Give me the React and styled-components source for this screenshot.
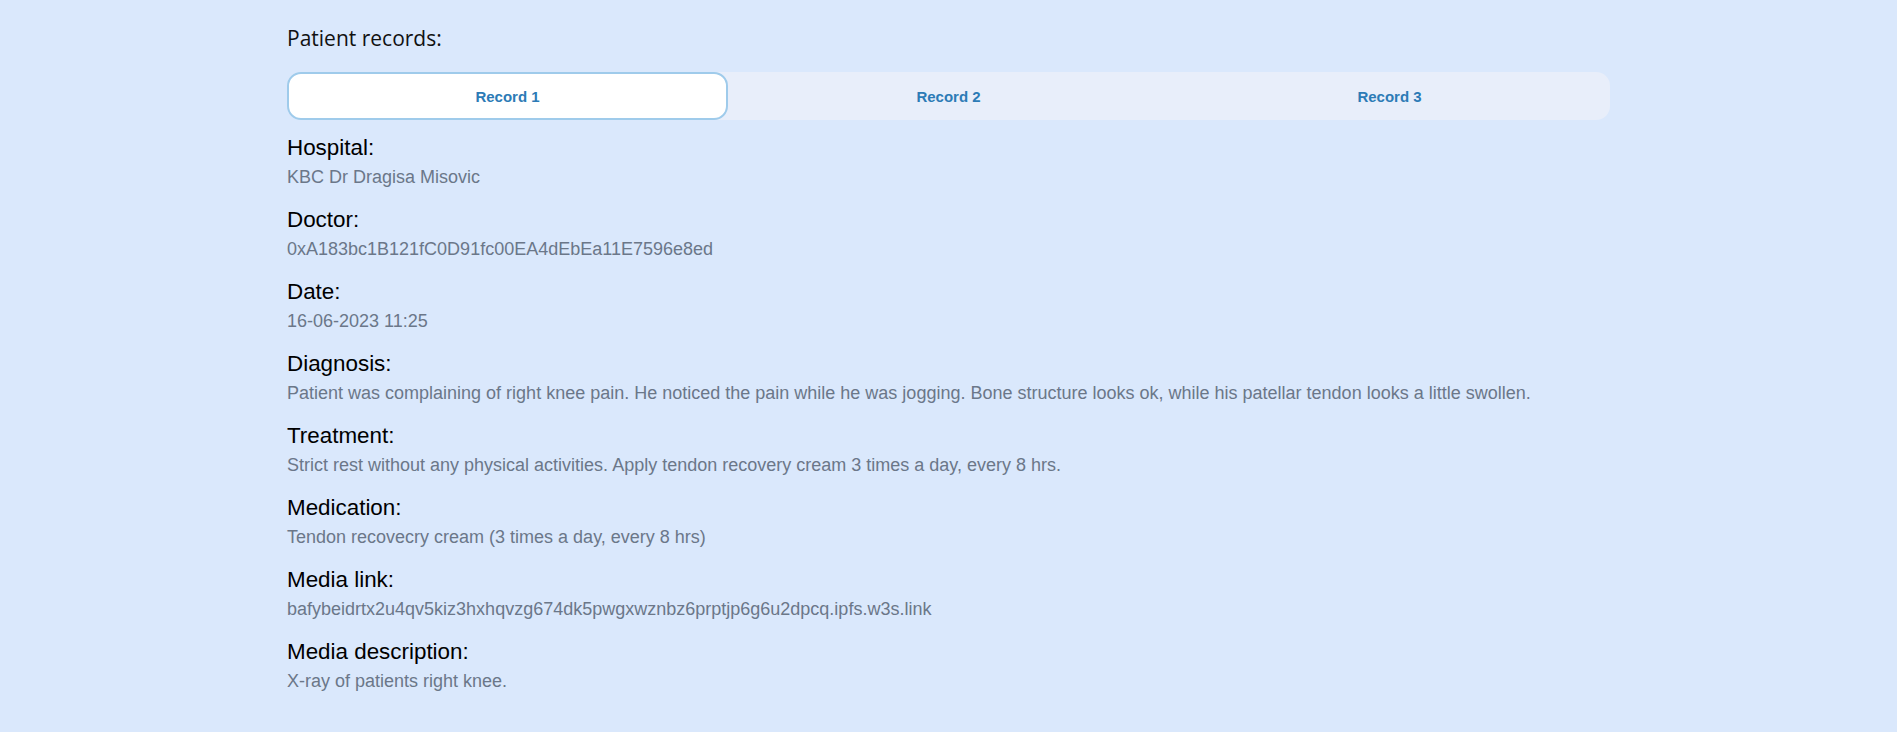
import React, { useState } from 'react';
import styled, { createGlobalStyle } from 'styled-components';

const GlobalStyle = createGlobalStyle`
    html, body {
        margin: 0;
        padding: 0;
        background-color: #dae8fc;
    }
    body {
        font-family: "Liberation Sans", Arial, sans-serif;
    }
`;

const Page = styled.div`
    width: 1323px;
    margin: 0 auto;
    padding-top: 24px;
`;

const Title = styled.h2`
    margin: 0 0 20px;
    font-family: "Open Sans", "Noto Sans", sans-serif;
    font-size: 21px;
    font-weight: 400;
    color: #111;
    line-height: 28px;
`;

const TabList = styled.div`
    display: grid;
    grid-template-columns: repeat(3, 1fr);
    height: 48px;
    background-color: #e8eefa;
    border-radius: 14px;
`;

const Tab = styled.button`
    border: 2px solid ${p => (p.$active ? '#9fcbeb' : 'transparent')};
    background-color: ${p => (p.$active ? '#ffffff' : 'transparent')};
    border-radius: 14px;
    font-family: "Liberation Sans", Arial, sans-serif;
    font-size: 15px;
    font-weight: 700;
    color: #2c7bb6;
    cursor: pointer;
`;

const Fields = styled.div`
    display: flex;
    flex-direction: column;
    gap: 19px;
    padding-top: 15px;
`;

const Field = styled.div`
    display: flex;
    flex-direction: column;
    gap: 6px;
`;

const Label = styled.div`
    font-size: 22.4px;
    color: #000;
    line-height: 26px;
`;

const Value = styled.div`
    font-size: 18px;
    color: #6b7789;
    line-height: 21px;
`;

const records = [
    {
        hospital: 'KBC Dr Dragisa Misovic',
        doctor: '0xA183bc1B121fC0D91fc00EA4dEbEa11E7596e8ed',
        date: '16-06-2023 11:25',
        diagnosis:
            'Patient was complaining of right knee pain. He noticed the pain while he was jogging. Bone structure looks ok, while his patellar tendon looks a little swollen.',
        treatment:
            'Strict rest without any physical activities. Apply tendon recovery cream 3 times a day, every 8 hrs.',
        medication: 'Tendon recovecry cream (3 times a day, every 8 hrs)',
        mediaLink: 'bafybeidrtx2u4qv5kiz3hxhqvzg674dk5pwgxwznbz6prptjp6g6u2dpcq.ipfs.w3s.link',
        mediaDescription: 'X-ray of patients right knee.',
    },
];

const fieldNames = [
    ['hospital', 'Hospital:'],
    ['doctor', 'Doctor:'],
    ['date', 'Date:'],
    ['diagnosis', 'Diagnosis:'],
    ['treatment', 'Treatment:'],
    ['medication', 'Medication:'],
    ['mediaLink', 'Media link:'],
    ['mediaDescription', 'Media description:'],
];

const App = () => {
    const [active, setActive] = useState(0);
    const record = records[active] || records[0];

    return (
        <>
            <GlobalStyle />
            <Page>
                <Title>Patient records:</Title>
                <TabList>
                    {['Record 1', 'Record 2', 'Record 3'].map((name, i) => (
                        <Tab key={name} $active={i === active} onClick={() => setActive(i)}>
                            {name}
                        </Tab>
                    ))}
                </TabList>
                <Fields>
                    {fieldNames.map(([key, label]) => (
                        <Field key={key}>
                            <Label>{label}</Label>
                            <Value>{record[key]}</Value>
                        </Field>
                    ))}
                </Fields>
            </Page>
        </>
    );
};

export default App;
